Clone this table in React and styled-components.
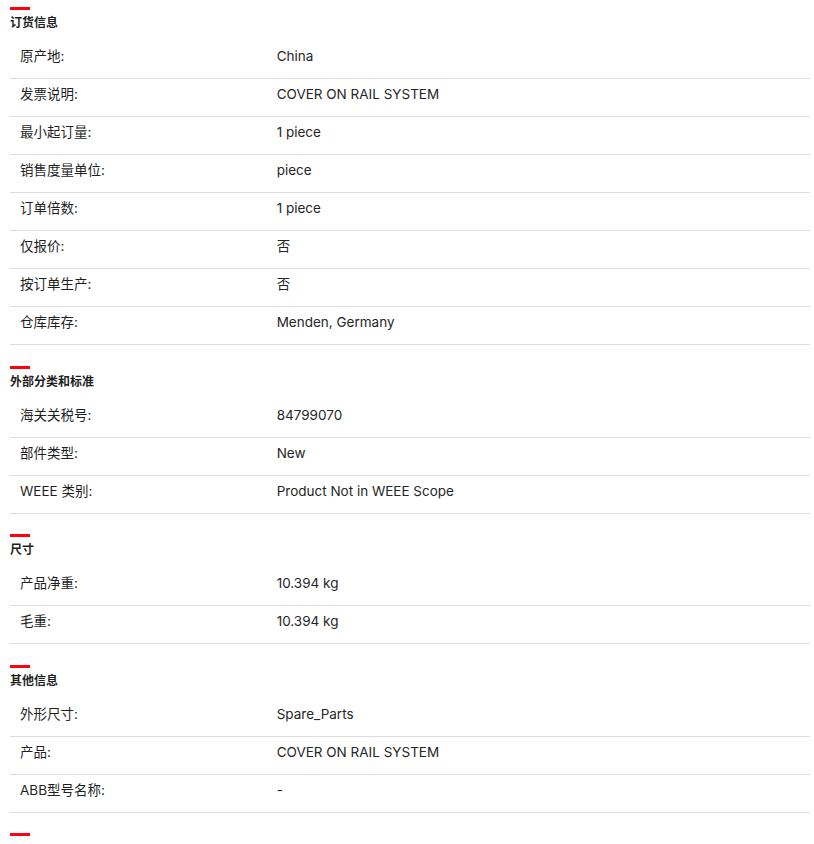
import React from "react";
import styled, { createGlobalStyle } from "styled-components";

const GlobalStyle = createGlobalStyle`
  html, body {
    margin: 0;
    padding: 0;
    background: #ffffff;
  }
  body {
    font-family: Inter, "Noto Sans CJK SC", sans-serif;
    color: #262626;
  }
`;

const Page = styled.div({
  padding: "7px 4px 0 10px",
});

const Section = styled.section({
  marginBottom: "20.5px",
});

const Bar = styled.div({
  width: "20px",
  height: "3px",
  backgroundColor: "#ff000f",
});

const Heading = styled.h3({
  margin: "6px 0 11px",
  fontSize: "12px",
  lineHeight: "14px",
  fontWeight: "700",
  color: "#1f1f1f",
});

const Table = styled.div({
  display: "flex",
  flexDirection: "column",
});

const Row = styled.div({
  display: "flex",
  height: "37px",
  borderBottom: "1px solid #dcdce4",
  fontSize: "13.5px",
  lineHeight: "14px",
});

const Label = styled.div({
  width: "33.333%",
  flexShrink: 0,
  padding: "8px 0 0 10px",
  boxSizing: "border-box",
  fontWeight: "400",
  color: "#1f1f1f",
});

const Value = styled.div({
  flex: "1",
  padding: "8px 0 0",
  fontWeight: "400",
});

const sections = [
  {
    title: "订货信息",
    rows: [
      ["原产地:", "China"],
      ["发票说明:", "COVER ON RAIL SYSTEM"],
      ["最小起订量:", "1 piece"],
      ["销售度量单位:", "piece"],
      ["订单倍数:", "1 piece"],
      ["仅报价:", "否"],
      ["按订单生产:", "否"],
      ["仓库库存:", "Menden, Germany"],
    ],
  },
  {
    title: "外部分类和标准",
    rows: [
      ["海关关税号:", "84799070"],
      ["部件类型:", "New"],
      ["WEEE 类别:", "Product Not in WEEE Scope"],
    ],
  },
  {
    title: "尺寸",
    rows: [
      ["产品净重:", "10.394 kg"],
      ["毛重:", "10.394 kg"],
    ],
  },
  {
    title: "其他信息",
    rows: [
      ["外形尺寸:", "Spare_Parts"],
      ["产品:", "COVER ON RAIL SYSTEM"],
      ["ABB型号名称:", "-"],
    ],
  },
];

function App() {
  return (
    <>
      <GlobalStyle />
      <Page>
        {sections.map((s) => (
          <Section key={s.title}>
            <Bar />
            <Heading>{s.title}</Heading>
            <Table>
              {s.rows.map(([label, value]) => (
                <Row key={label}>
                  <Label>{label}</Label>
                  <Value>{value}</Value>
                </Row>
              ))}
            </Table>
          </Section>
        ))}
        <Section>
          <Bar />
        </Section>
      </Page>
    </>
  );
}

export default App;
